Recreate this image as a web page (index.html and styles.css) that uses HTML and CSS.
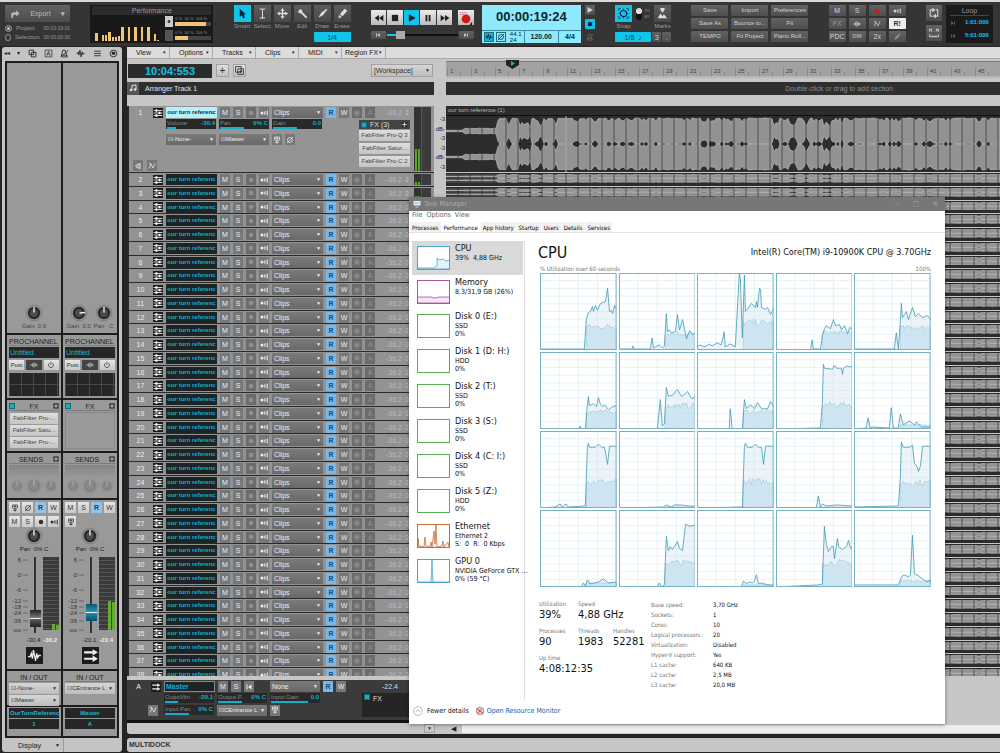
FILE: index.html
```html
<!DOCTYPE html>
<html lang="en">

<head>
  <meta charset="UTF-8">
  <meta name="viewport" content="width=device-width, initial-scale=1.0">
  <title>Studio Session</title>

  <link rel="stylesheet" href="styles.css">
</head>

<body>
  <svg class="sprite" aria-hidden="true">
    <symbol id="i-export" viewBox="0 0 16 16"><path d="M2 14V8q0-3 4-3h4V2l5 5-5 5V9H7q-2 0-2 2v3z" fill="currentColor"/></symbol>
    <symbol id="i-smart" viewBox="0 0 16 16"><path d="M4 1v12l3-2.500 2 4.500 2.500-1-2-4.500H13z" fill="currentColor"/></symbol>
    <symbol id="i-select" viewBox="0 0 16 16"><path d="M4 1.500h3l1 1 1-1h3M8 2.500v11M4 14.500h3l1-1 1 1h3" fill="none" stroke="currentColor" stroke-width="1.500"/></symbol>
    <symbol id="i-move" viewBox="0 0 16 16"><path d="M8 0l3 4H9v3h3V5l4 3-4 3V9H9v3h2l-3 4-3-4h2V9H4v2L0 8l4-3v2h3V4H5z" fill="currentColor"/></symbol>
    <symbol id="i-wrench" viewBox="0 0 16 16"><path d="M2 4l2-2h3l1 4 7 7-2 2-7-7-4-1z" fill="currentColor"/></symbol>
    <symbol id="i-draw" viewBox="0 0 16 16"><path d="M14 1L6 7l-4 7 7-4 6-8z" fill="currentColor"/></symbol>
    <symbol id="i-erase" viewBox="0 0 16 16"><path d="M11 1l4 3-7 8-4-3zM3 10l4 3-5 2z" fill="currentColor"/></symbol>
    <symbol id="i-rew" viewBox="0 0 16 16"><path d="M8 3v10L1 8zM15 3v10L8 8z" fill="currentColor"/></symbol>
    <symbol id="i-fwd" viewBox="0 0 16 16"><path d="M1 3v10l7-5zM8 3v10l7-5z" fill="currentColor"/></symbol>
    <symbol id="i-stop" viewBox="0 0 16 16"><path d="M3 3h10v10H3z" fill="currentColor"/></symbol>
    <symbol id="i-play" viewBox="0 0 16 16"><path d="M3 2v12l11-6z" fill="currentColor"/></symbol>
    <symbol id="i-pause" viewBox="0 0 16 16"><path d="M4 3h3v10H4zM9 3h3v10H9z" fill="currentColor"/></symbol>
    <symbol id="i-dot" viewBox="0 0 16 16"><circle cx="8" cy="8" r="4.500" fill="currentColor"/></symbol>
    <symbol id="i-rec" viewBox="0 0 16 16"><path d="M1 2h8M1 4h5" stroke="#d88" stroke-width="1"/><circle cx="8" cy="9" r="5" fill="currentColor"/><path d="M15 12v4h-3z" fill="#222"/></symbol>
    <symbol id="i-prev" viewBox="0 0 16 16"><path d="M3 3h2v10H3zM13 3v10L6 8z" fill="currentColor"/></symbol>
    <symbol id="i-next" viewBox="0 0 16 16"><path d="M11 3h2v10h-2zM3 3v10l7-5z" fill="currentColor"/></symbol>
    <symbol id="i-metro" viewBox="0 0 16 16"><path d="M5 2h4l4 12H2zM5 11L15 2M3 11h9" fill="none" stroke="currentColor" stroke-width="1.500"/></symbol>
    <symbol id="i-snap" viewBox="0 0 16 16"><circle cx="8" cy="8" r="4.500" fill="none" stroke="currentColor" stroke-width="1.500"/><path d="M1 4V1h3M12 1h3v3M15 12v3h-3M4 15H1v-3M8 1v3M8 12v3M1 8h3M12 8h3" fill="none" stroke="currentColor"/></symbol>
    <symbol id="i-marks" viewBox="0 0 16 16"><path d="M1 15l4-7 3 4 2-3 5 6zM5 0h6v3L8 7 5 3z" fill="currentColor"/></symbol>
    <symbol id="i-echo" viewBox="0 0 16 16"><circle cx="4" cy="8" r="3" fill="currentColor"/><path d="M9 5v6M12 4v8M15 3v10" stroke="currentColor" stroke-width="1.500"/></symbol>
    <symbol id="i-burst" viewBox="0 0 16 16"><path d="M8 1v14M1 8h14M3 3l10 10M13 3L3 13" stroke="currentColor" stroke-width="2"/></symbol>
    <symbol id="i-loop" viewBox="0 0 16 16"><path d="M6 3H2v10h3M10 13h4V3h-3M6 1v4l3-2zM10 11v4l-3-2z" fill="none" stroke="currentColor" stroke-width="1.800"/></symbol>
    <symbol id="i-range" viewBox="0 0 16 16"><path d="M1 6V2h4M11 2h4v4M2 2l3 4M14 2l-3 4M1 10v4h14v-4M5 12v2M8 12v2M11 12v2" fill="none" stroke="currentColor" stroke-width="1.500"/></symbol>
    <symbol id="i-windows" viewBox="0 0 16 16"><path d="M2 2h8v8H2zM6 6h8v8H6z" fill="none" stroke="currentColor" stroke-width="1.500"/></symbol>
    <symbol id="i-addwin" viewBox="0 0 16 16"><path d="M1 1h10v10H1zM5 5h10v10H5zM10 7v6M7 10h6" fill="none" stroke="currentColor" stroke-width="1.500"/></symbol>
    <symbol id="i-abox" viewBox="0 0 16 16"><path d="M2 2h12v12H2zM5 12l3-8 3 8M6 9h4" fill="none" stroke="currentColor" stroke-width="1.200"/></symbol>
    <symbol id="i-wave" viewBox="0 0 16 16"><path d="M1 8h2l1-3 1 6 2-9 2 12 2-9 1 5 1-2h2" fill="none" stroke="currentColor" stroke-width="1.500"/></symbol>
    <symbol id="i-list" viewBox="0 0 16 16"><path d="M2 4h12M2 8h12M2 12h12" stroke="currentColor" stroke-width="1.500"/></symbol>
    <symbol id="i-plug" viewBox="0 0 16 16"><circle cx="8" cy="8" r="6" fill="none" stroke="currentColor" stroke-width="1.500"/><path d="M5 5h6v5H5z" fill="currentColor"/></symbol>
    <symbol id="i-note" viewBox="0 0 16 16"><path d="M6 12V3l8-1v9" fill="none" stroke="currentColor" stroke-width="2"/><circle cx="4" cy="12" r="2.500" fill="currentColor"/><circle cx="12" cy="11" r="2.500" fill="currentColor"/></symbol>
    <symbol id="i-track" viewBox="0 0 16 16"><path d="M0 0h16v16H0z" fill="#1c1c1c"/><path d="M1 4h14M1 8h14M1 12h14" stroke="#ddd" stroke-width="1.500"/><path d="M4 2h3v4H4zM9 6h3v4H9zM4 10h3v4H4z" fill="#fff"/></symbol>
    <symbol id="i-bus" viewBox="0 0 16 16"><path d="M0 0h16v16H0z" fill="#1c1c1c"/><path d="M2 5h9M2 11h9" stroke="#eee" stroke-width="2"/><path d="M10 2l5 3-5 3zM10 8l5 3-5 3z" fill="#eee"/></symbol>
    <symbol id="i-audio" viewBox="0 0 16 16"><path d="M0 0h16v16H0z" fill="#1c1c1c"/><path d="M2 9h2l1-3 1 5 1-8 2 10 1-7 1 4 1-2h2" fill="none" stroke="#eee" stroke-width="1.200"/></symbol>
    <symbol id="i-mic" viewBox="0 0 16 16"><path d="M3 2h10v6l-3 2H6L3 8zM8 2v13M5 13h6M5 5h6" fill="none" stroke="currentColor" stroke-width="1.500"/></symbol>
    <symbol id="i-phase" viewBox="0 0 16 16"><circle cx="8" cy="8" r="5" fill="none" stroke="currentColor" stroke-width="1.500"/><path d="M2 14L14 2" stroke="currentColor" stroke-width="1.500"/></symbol>
    <symbol id="i-power" viewBox="0 0 16 16"><path d="M5 4a5 5 0 1 0 6 0M8 1v7" fill="none" stroke="currentColor" stroke-width="1.500"/></symbol>
    <symbol id="i-chain" viewBox="0 0 16 16"><circle cx="8" cy="8" r="4" fill="none" stroke="currentColor" stroke-width="1.500"/><path d="M0 8h16M6 6v4M10 6v4" stroke="currentColor" stroke-width="1.500"/></symbol>
    <symbol id="i-auto" viewBox="0 0 16 16"><path d="M2 13L6 4l4 8 4-9M2 3h4" fill="none" stroke="currentColor" stroke-width="1.500"/></symbol>
    <symbol id="i-lanes" viewBox="0 0 16 16"><path d="M14 4H8L3 8l5 4h6M7 8h7" fill="none" stroke="currentColor" stroke-width="2"/></symbol>
    <symbol id="i-plusbox" viewBox="0 0 16 16"><path d="M1 1h14v14H1z" fill="#333"/><path d="M8 3v10M3 8h10" stroke="#ddd" stroke-width="2"/></symbol>
    <symbol id="i-updown" viewBox="0 0 16 16"><path d="M8 0l4 4H4zM8 16l4-4H4zM3 6h10v1.500H3zM3 9h10v1.500H3z" fill="currentColor"/></symbol>
    <symbol id="i-knob" viewBox="0 0 32 32"><circle cx="16" cy="16" r="14" fill="none" stroke="#666"/><circle cx="16" cy="16" r="12" fill="#8c8c8c"/><circle cx="16" cy="16" r="11" fill="#292929"/><circle cx="16" cy="16" r="7" fill="#4b4b4b"/><path d="M16 5v10" stroke="#eee" stroke-width="2.500"/></symbol>
  </svg>

  <header class="topbar">
    <section class="export">
      <button class="btn export-btn"><svg><use href="#i-export"/></svg><span>Export</span><b>▾</b></button>
      <label><input type="radio" name="scope" checked><span>Project</span><span class="stamp">00:03:19:01</span></label>
      <label><input type="radio" name="scope"><span>Selection</span><span class="stamp">00:00:00:00</span></label>
    </section>

    <section class="perf">
      <h2>Performance</h2>
      <div class="perf-body">
        <div class="perf-bars" id="perf"></div>
        <div class="perf-side">
          <div class="perf-row"><i class="disk"></i><div><small>0 %&nbsp; 50 %&nbsp; 100 %</small><div class="gauge"><span class="gauge-hi"></span></div></div></div>
          <div class="perf-row"><i class="ram"></i><div><small>0 %&nbsp; 50 %&nbsp; 100 %</small><div class="gauge"><span class="gauge-lo"></span></div></div></div>
        </div>
      </div>
    </section>

    <section class="tools">
      <div class="tool-row" id="tools"></div>
      <button class="cyan-btn draw-res">1/4</button>
    </section>

    <section class="transport-group">
      <div class="transport">
        <div class="keys">
          <button class="key" aria-label="Rewind"><svg><use href="#i-rew"/></svg></button>
          <button class="key" aria-label="Stop"><svg><use href="#i-stop"/></svg></button>
          <button class="key on" aria-label="Play"><svg><use href="#i-play"/></svg></button>
          <button class="key" aria-label="Pause"><svg><use href="#i-pause"/></svg></button>
          <button class="key" aria-label="Fast forward"><svg><use href="#i-fwd"/></svg></button>
          <button class="key rec" aria-label="Record"><svg><use href="#i-rec"/></svg></button>
        </div>
        <div class="seek">
          <button class="btn" aria-label="Go to start"><svg><use href="#i-prev"/></svg></button>
          <input type="range" value="14" aria-label="Position">
          <button class="btn" aria-label="Go to end"><svg><use href="#i-next"/></svg></button>
        </div>
      </div>
      <div class="lcd">
        <output>00:00:19:24</output>
        <div class="lcd-row">
          <span class="lcd-icons"><svg class="sel"><use href="#i-wave"/></svg><svg><use href="#i-phase"/></svg></span>
          <span class="rate">44.1<br>24</span><b>120.00</b><b>4/4</b>
        </div>
      </div>
      <div class="mini">
        <button class="btn" aria-label="Preview"><svg><use href="#i-play"/></svg></button>
        <button class="btn cyan" aria-label="Arm"><svg><use href="#i-dot"/></svg></button>
        <button class="btn flat" aria-label="Metronome"><svg><use href="#i-metro"/></svg></button>
      </div>
    </section>

    <section class="snap">
      <div class="snap-row">
        <div class="tool active"><button aria-label="Snap"><svg><use href="#i-snap"/></svg></button><span>Snap</span></div>
        <div class="toggle"><i></i><small>TO<br>BY</small></div>
        <div class="tool"><button aria-label="Marks"><svg><use href="#i-marks"/></svg></button><span>Marks</span></div>
      </div>
      <div class="snap-res"><button class="cyan-btn">1/8 &nbsp;♪</button><button class="btn">3</button><button class="btn">.</button></div>
    </section>

    <section class="cmds">
      <button class="btn">Save</button><button class="btn">Import</button><button class="btn">Preferences</button>
      <button class="btn">Save As</button><button class="btn">Bounce to...</button><button class="btn">Fit</button>
      <button class="btn">TEMPO</button><button class="btn">Fit Project</button><button class="btn">Piano Roll...</button>
    </section>

    <section class="mix">
      <button class="btn">M</button><button class="btn">S</button><button class="btn red" aria-label="Record arm"><svg><use href="#i-dot"/></svg></button><button class="btn" aria-label="Input echo"><svg><use href="#i-echo"/></svg></button>
      <button class="btn dim">FX</button><button class="btn" aria-label="Chain"><svg><use href="#i-chain"/></svg></button><button class="btn" aria-label="Automation"><svg><use href="#i-auto"/></svg></button><button class="btn white">R!</button>
      <button class="btn">PDC</button><button class="btn tiny">DIM</button><button class="btn">2x</button><button class="btn dim" aria-label="Bypass"><svg><use href="#i-draw"/></svg></button>
    </section>

    <section class="loop">
      <div class="loop-keys">
        <button class="btn" aria-label="Loop"><svg><use href="#i-loop"/></svg></button>
        <button class="btn" aria-label="Set loop range"><svg><use href="#i-range"/></svg></button>
      </div>
      <div class="loop-box">
        <h2>Loop</h2>
        <p><svg><use href="#i-next"/></svg>1:01:000</p>
        <p><svg><use href="#i-prev"/></svg>5:01:000</p>
      </div>
    </section>
  </header>

  <div class="workspace">
    <aside class="inspector">
      <nav class="insp-bar">
        <span>◂◂</span><span>▾</span>
        <svg><use href="#i-windows"/></svg><svg><use href="#i-abox"/></svg><svg><use href="#i-metro"/></svg><svg><use href="#i-wave"/></svg><svg><use href="#i-list"/></svg><svg><use href="#i-plug"/></svg>
      </nav>
      <div class="strips" id="strips"></div>
      <button class="display">Display<span>▼</span></button>
    </aside>

    <main class="project">
      <section class="arrange">
        <nav class="menubar" id="menubar"></nav>
        <div class="panes">
          <div class="tracks">
            <div class="track-head">
              <output class="now">10:04:553</output>
              <button class="light-btn" aria-label="Add track">+</button>
              <button class="light-btn" aria-label="Duplicate"><svg><use href="#i-addwin"/></svg></button>
              <span class="drop light"><select aria-label="Workspace"><option>[Workspace]</option></select></span>
            </div>
            <div class="arranger"><i><svg><use href="#i-note"/></svg></i>Arranger Track 1</div>
            <div class="track-list">
              <div class="track first" id="track1"></div>
              <div class="clip-rows"><div class="rows" id="rows"></div></div>
            </div>
            <div class="master" id="master"></div>
          </div>

          <div class="timeline">
            <div class="ruler" id="ruler"></div>
            <div class="section-bar">Double-click or drag to add section</div>
            <div class="lanes">
              <div class="lane-big">
                <div class="db"><span>-3</span><span>dB-</span><span>-3</span><span>-3</span><span>dB-</span><span>-3</span></div>
                <div class="clip"><h3>our turn reference (1)</h3><svg id="wave" viewBox="0 0 554 56" preserveAspectRatio="none"></svg></div>
              </div>
              <div class="clip-rows"><div class="lane-rows" id="lanes"></div></div>
            </div>
          </div>
        </div>
        <div class="hscroll"><button class="light-btn">▼</button><span>◀</span><i></i></div>
      </section>
      <footer class="multidock">MULTIDOCK</footer>
    </main>
  </div>

  <section class="taskmgr">
    <header class="tm-title"><svg viewBox="0 0 16 16"><path d="M1 2h14v9H1z" fill="#dcebf5"/><path d="M3 8l2-3 2 3 3-4 3 3" fill="none" stroke="#5b99bd"/><path d="M5 13h6v2H5z" fill="#ccc"/></svg><span>Task Manager</span>
      <div class="tm-win"><button aria-label="Minimize">–</button><button aria-label="Maximize">□</button><button aria-label="Close">✕</button></div>
    </header>
    <nav class="tm-menu"><a href="#">File</a><a href="#">Options</a><a href="#">View</a></nav>
    <nav class="tm-tabs"><button>Processes</button><button class="current">Performance</button><button>App history</button><button>Startup</button><button>Users</button><button>Details</button><button>Services</button></nav>
    <div class="tm-body">
      <div class="tm-side" id="side"></div>
      <div class="tm-main">
        <div class="tm-head"><h1>CPU</h1><span>Intel(R) Core(TM) i9-10900K CPU @ 3.70GHz</span></div>
        <div class="tm-cap"><span>% Utilization over 60 seconds</span><span>100%</span></div>
        <div class="cores" id="cores"></div>
        <div class="stats">
          <div class="stats-big">
            <div><small>Utilization</small><b>39%</b></div>
            <div class="wide"><small>Speed</small><b>4,88 GHz</b></div>
            <div><small>Processes</small><b>90</b></div>
            <div><small>Threads</small><b>1983</b></div>
            <div><small>Handles</small><b>52281</b></div>
            <div class="full"><small>Up time</small><b>4:08:12:35</b></div>
          </div>
          <table>
            <tr><th scope="row">Base speed:</th><td>3,70 GHz</td></tr>
            <tr><th scope="row">Sockets:</th><td>1</td></tr>
            <tr><th scope="row">Cores:</th><td>10</td></tr>
            <tr><th scope="row">Logical processors:</th><td>20</td></tr>
            <tr><th scope="row">Virtualization:</th><td>Disabled</td></tr>
            <tr><th scope="row">Hyper-V support:</th><td>Yes</td></tr>
            <tr><th scope="row">L1 cache:</th><td>640 KB</td></tr>
            <tr><th scope="row">L2 cache:</th><td>2,5 MB</td></tr>
            <tr><th scope="row">L3 cache:</th><td>20,0 MB</td></tr>
          </table>
        </div>
      </div>
    </div>
    <footer class="tm-foot">
      <button><svg viewBox="0 0 16 16"><circle cx="8" cy="8" r="7" fill="none" stroke="#999"/><path d="M5 9l3-3 3 3" fill="none" stroke="#777"/></svg>Fewer details</button>
      <a href="#"><svg viewBox="0 0 16 16"><circle cx="8" cy="8" r="6" fill="#d9dde2" stroke="#b33"/><path d="M3 4l10 8M5 11l5-6" stroke="#b33" stroke-width="1.500"/></svg>Open Resource Monitor</a>
    </footer>
  </section>

  <script src="app.js"></script>
</body>

</html>
```
FILE: styles.css
```css
* {
  box-sizing: border-box;
}

body {
  margin: 0;
  height: 100vh;
  display: flex;
  flex-direction: column;
  overflow: hidden;
  position: relative;
  background: #242424;
  color: #222;
  font: 7px/9px "Liberation Sans", Arial, sans-serif;
}

h1, h2, h3, p {
  margin: 0;
  font-weight: normal;
  font-size: inherit;
}

button, select, input {
  font: inherit;
  color: inherit;
  margin: 0;
  padding: 0;
  border: none;
  background: none;
}

svg {
  display: block;
  width: 10px;
  height: 10px;
  flex: none;
}

.sprite {
  position: absolute;
  width: 0;
  height: 0;
}

/* top bar */
.topbar {
  display: flex;
  justify-content: space-between;
  height: 46px;
  padding: 3px 7px 3px 5px;
  border-top: 2px solid #d8d8d8;
  background: #353535;
  color: #999;
}

.btn {
  display: flex;
  align-items: center;
  justify-content: center;
  background: linear-gradient(#626262, #4e4e4e);
  color: #d2d2d2;
  border-radius: 1px;
  white-space: nowrap;
}

.btn.dim {
  color: #999;
}

.btn.tiny {
  font-size: 5px;
}

.btn.red {
  color: #d01818;
}

.btn.white {
  background: #eee;
  color: #333;
  font-weight: bold;
}

.btn.cyan {
  background: #14bfe4;
  color: #124;
}

.btn.flat {
  background: none;
  color: #666;
}

.cyan-btn {
  background: #12c3ea;
  color: #045;
  border-radius: 1px;
  height: 10px;
}

.export {
  width: 65px;
}

.export-btn {
  width: 100%;
  height: 17px;
  justify-content: space-around;
  margin-bottom: 2px;
  color: #bbb;
}

.export label {
  display: flex;
  align-items: center;
  gap: 4px;
  height: 9px;
  font-size: 6px;
}

.export input {
  appearance: none;
  width: 7px;
  height: 7px;
  border: 1px solid #888;
  border-radius: 50%;
}

.export input:checked {
  background: #ccc;
  box-shadow: inset 0 0 0 1px #333;
}

.stamp {
  margin-left: auto;
  font-size: 5px;
}

.perf {
  width: 123px;
  height: 38px;
  padding: 1px 2px;
  background: #191919;
}

.perf h2 {
  text-align: center;
  background: #2b2b2b;
}

.perf-body {
  display: flex;
  height: 27px;
  gap: 3px;
}

.perf-bars {
  flex: 1;
  display: flex;
  align-items: flex-end;
  gap: 1px;
  padding: 0 3px 1px;
}

.perf-bars span {
  flex: 1;
  background: #f2c478;
}

.perf-side {
  width: 46px;
  display: flex;
  flex-direction: column;
  justify-content: space-around;
}

.perf-row {
  display: flex;
  gap: 2px;
}

.perf-row div {
  flex: 1;
}

.perf-row i {
  width: 8px;
  height: 11px;
  background: #555;
}

.perf-row .disk {
  background: radial-gradient(circle, #444 20%, #ccc 25%);
}

.perf-row small {
  display: block;
  font-size: 4px;
  line-height: 6px;
  white-space: nowrap;
}

.gauge {
  background: #444;
  height: 4px;
}

.gauge span {
  display: block;
  height: 4px;
  background: #f2c478;
}

.gauge-hi {
  width: 86%;
}

.gauge-lo {
  width: 36%;
}

.tool-row {
  display: flex;
  gap: 3px;
}

.tool {
  width: 17px;
  display: flex;
  flex-direction: column;
  align-items: center;
  font-size: 6px;
}

.tool button {
  width: 17px;
  height: 17px;
  display: flex;
  align-items: center;
  justify-content: center;
  background: linear-gradient(#5c5c5c, #484848);
  color: #ddd;
}

.tool.active button {
  background: #12c3ea;
  color: #023;
}

.tool svg {
  width: 11px;
  height: 11px;
}

.draw-res {
  display: block;
  width: 37px;
  margin: 1px 0 0 auto;
}

.transport-group {
  display: flex;
  gap: 8px;
}

.transport {
  width: 103px;
  padding-top: 5px;
}

.keys {
  display: flex;
  gap: 1px;
}

.key {
  flex: 1;
  height: 15px;
  display: flex;
  align-items: center;
  justify-content: center;
  background: linear-gradient(#ececec, #bbb);
  color: #222;
}

.key.on {
  background: #12c3ea;
}

.key.rec {
  margin-left: 5px;
  color: #d01818;
}

.key.rec svg {
  width: 14px;
  height: 14px;
}

.seek {
  display: flex;
  align-items: center;
  gap: 1px;
  margin-top: 5px;
}

.seek .btn {
  width: 15px;
  height: 8px;
}

.seek svg {
  width: 6px;
  height: 6px;
}

.seek input {
  appearance: none;
  flex: 1;
  min-width: 0;
  height: 9px;
  background: linear-gradient(90deg, #12c3ea 10px, #111 10px) center / 100% 2px no-repeat;
}

.seek input::-webkit-slider-thumb {
  appearance: none;
  width: 9px;
  height: 8px;
  background: #aaa;
}

.lcd {
  width: 99px;
  height: 38px;
  display: flex;
  flex-direction: column;
  background: #8fe9fc;
  color: #0b2530;
}

.lcd output {
  flex: 1;
  text-align: center;
  font-size: 13px;
  line-height: 24px;
  font-weight: bold;
}

.lcd-row {
  display: flex;
  height: 13px;
  border-top: 1px solid #3a8a9c;
  align-items: center;
}

.lcd-icons {
  display: flex;
  gap: 2px;
  padding: 0 2px;
}

.lcd-icons svg {
  border: 1px solid #266c80;
}

.lcd-icons .sel {
  background: #12b3dd;
}

.lcd-row .rate {
  font-size: 6px;
  line-height: 6px;
  padding: 0 2px;
}

.lcd-row b {
  flex: 1 1 auto;
  text-align: center;
  line-height: 12px;
  border-left: 1px solid #3a8a9c;
}

.mini {
  display: flex;
  flex-direction: column;
  justify-content: space-between;
  width: 10px;
  height: 37px;
  margin-left: -4px;
}

.mini .btn {
  height: 10px;
}

.mini svg {
  width: 8px;
  height: 8px;
}

.snap {
  width: 56px;
}

.snap-row, .snap-res {
  display: flex;
  justify-content: space-between;
}

.snap-res {
  gap: 1px;
  margin-top: 1px;
}

.snap-res .cyan-btn {
  flex: 1;
}

.snap-res .btn {
  width: 9px;
}

.toggle {
  display: flex;
  gap: 2px;
  padding-top: 3px;
}

.toggle i {
  width: 6px;
  height: 12px;
  border-radius: 3px;
  background: radial-gradient(circle at 3px 3px, #ddd 3px, #111 3px);
}

.toggle small {
  font-size: 4px;
  line-height: 6px;
}

.cmds, .mix {
  display: grid;
  grid-template-rows: repeat(3, 11px);
  gap: 2px 3px;
}

.cmds {
  grid-template-columns: repeat(3, 37px);
  font-size: 6px;
}

.mix {
  grid-template-columns: repeat(4, 17px);
}

.mix svg {
  width: 8px;
  height: 8px;
}

.loop {
  display: flex;
  gap: 4px;
}

.loop-keys {
  display: flex;
  flex-direction: column;
  gap: 4px;
}

.loop-keys .btn {
  width: 16px;
  height: 16px;
}

.loop-box {
  width: 47px;
  height: 38px;
  padding: 1px 4px;
  background: #1a1a1a;
}

.loop-box h2 {
  text-align: center;
  border-bottom: 1px solid #444;
}

.loop-box p {
  display: flex;
  justify-content: space-between;
  align-items: center;
  height: 13px;
  color: #18c4e8;
  font-weight: bold;
  font-size: 6px;
}

.loop-box svg {
  width: 6px;
  height: 6px;
  color: #666;
}

/* inspector */
.workspace {
  flex: 1;
  min-height: 0;
  display: flex;
  gap: 5px;
  padding: 1px 0 1px 2px;
}

.inspector {
  width: 120px;
  display: flex;
  flex-direction: column;
  background: #c4c4c4;
  border-radius: 3px;
}

.insp-bar {
  display: flex;
  align-items: center;
  justify-content: space-between;
  height: 12px;
  margin: 0 4px 2px 2px;
  font-size: 6px;
}

.insp-bar svg {
  width: 9px;
  height: 9px;
}

.strips {
  flex: 1;
  min-height: 0;
  display: flex;
  gap: 2px;
  margin: 0 3px;
  padding: 2px;
  background: #1d1d1d;
}

.strip {
  flex: 1;
  min-width: 0;
  display: flex;
  flex-direction: column;
  gap: 2px;
}

.strip > section {
  background: #999;
  padding: 2px;
}

.strip .gain {
  flex: 1;
  display: flex;
  align-items: flex-end;
  justify-content: space-around;
  color: #444;
}

.strip .gain div {
  display: flex;
  flex-direction: column;
  align-items: center;
  font-size: 6px;
  white-space: nowrap;
}

.knob {
  width: 18px;
  height: 18px;
}

.knob.right {
  transform: rotate(85deg);
}

.strip h3 {
  display: flex;
  align-items: center;
  justify-content: space-between;
  height: 9px;
  margin-bottom: 1px;
  border-bottom: 1px solid #7c7c7c;
}

.strip h3 svg {
  width: 6px;
  height: 6px;
}

.strip h3.center {
  justify-content: center;
}

.preset, .name {
  background: #262626;
  color: #1fb6c9;
  height: 11px;
  line-height: 11px;
  padding: 0 1px;
  white-space: nowrap;
  overflow: hidden;
}

.pc-keys {
  display: flex;
  gap: 2px;
  padding: 2px 0 3px;
}

.strip-btn {
  display: flex;
  align-items: center;
  justify-content: center;
  height: 10px;
  flex: 1;
  background: linear-gradient(#e6e6e6, #c8c8c8);
  color: #333;
}

.pc-keys .strip-btn {
  font-size: 6px;
}

.strip-btn svg {
  width: 8px;
  height: 8px;
}

.strip-btn.dark {
  background: #444;
  color: #bbb;
}

.strip-btn.read {
  background: #8ec4ee;
  color: #146;
  font-weight: bold;
}

.eq {
  height: 23px;
  background: repeating-linear-gradient(90deg, #484848 0 1px, transparent 1px 12px), linear-gradient(#262626 11px, #484848 11px, #484848 12px, #262626 12px);
}

.fx-slots {
  height: 37px;
  display: flex;
  flex-direction: column;
  gap: 1px;
  border: 1px solid #8a8a8a;
}

.fx-slots.filled {
  border-color: transparent;
}

.plugin {
  height: 11px;
  line-height: 11px;
  text-align: center;
  background: linear-gradient(#dedede, #c4c4c4);
  color: #444;
  font-size: 6px;
  white-space: nowrap;
}

.led {
  width: 6px;
  height: 6px;
  border: 1px solid #136d7a;
  background: #26a6b6;
}

.send-slot {
  height: 11px;
  background: linear-gradient(#858585, #959595);
}

.send-knobs {
  display: flex;
  justify-content: space-around;
  align-items: center;
  height: 20px;
  opacity: .2;
}

.send-knobs svg {
  width: 14px;
  height: 14px;
}

.send-knobs svg:nth-child(2) {
  width: 18px;
  height: 18px;
}

.ch-keys {
  display: grid;
  grid-template-columns: repeat(4, 11px);
  gap: 3px 2px;
  height: 25px;
}

.ch-keys .strip-btn {
  height: 11px;
}

.strip .fader-area {
  display: flex;
  flex-direction: column;
  align-items: center;
  font-size: 6px;
  padding-bottom: 3px;
}

.fader-row {
  display: flex;
  height: 76px;
  gap: 1px;
  margin-top: 3px;
  width: 100%;
}

.scale {
  width: 19px;
  height: 76px;
  font-size: 6px;
}

.fader {
  appearance: none;
  writing-mode: vertical-lr;
  direction: rtl;
  width: 12px;
  height: 76px;
  background: linear-gradient(#333, #333) center / 2px 100% no-repeat;
}

.fader::-webkit-slider-thumb {
  appearance: none;
  width: 11px;
  height: 17px;
  background: linear-gradient(#222, #777 45%, #eee 48%, #eee 54%, #555 56%, #222);
}

.fader.blue::-webkit-slider-thumb {
  background: linear-gradient(#0b5670, #2294bb 45%, #eee 48%, #eee 54%, #1c86ab 56%, #0b4c64);
}

.level {
  margin-left: auto;
  width: 16px;
  height: 73px;
  display: flex;
  align-items: flex-end;
  justify-content: flex-end;
  gap: 1px;
  background: repeating-linear-gradient(#3a3a3a 0 3px, #555 3px 4px);
}

.level span {
  width: 3px;
  background: #62ac2e;
}

.readout {
  display: flex;
  justify-content: flex-end;
  gap: 3px;
  width: 100%;
  padding: 3px 2px 2px;
}

.readout b {
  color: #eee;
}

.type-icon {
  width: 17px;
  height: 17px;
}

.io {
  height: 34px;
}

.strip .ident {
  padding: 1px 2px 6px;
  text-align: center;
}

.ident .name {
  height: 10px;
  margin-bottom: 1px;
  line-height: 10px;
  font-size: 6px;
  font-weight: bold;
}

.drop {
  display: flex;
  align-items: center;
  height: 11px;
  background: linear-gradient(#7a7a7a, #696969);
  color: #eee;
  overflow: hidden;
}

.drop select {
  appearance: none;
  flex: 1;
  min-width: 0;
  height: 11px;
  padding-left: 2px;
}

.drop::after {
  content: "▼";
  width: 9px;
  font-size: 5px;
  text-align: center;
}

.drop.light {
  background: linear-gradient(#d6d6d6, #bdbdbd);
  color: #333;
}

.io .drop {
  margin-bottom: 1px;
  font-size: 6px;
}

.display {
  display: flex;
  justify-content: space-between;
  align-items: center;
  height: 14px;
  width: 62px;
  padding: 0 3px 0 16px;
  border-right: 1px solid #999;
}

.display span {
  font-size: 5px;
}

/* project pane */
.project {
  flex: 1;
  min-width: 0;
  display: flex;
  flex-direction: column;
  gap: 4px;
}

.arrange {
  flex: 1;
  min-height: 0;
  display: flex;
  flex-direction: column;
  background: #c6c6c6;
  border-radius: 3px 0 0 3px;
}

.multidock {
  height: 14px;
  padding-left: 2px;
  line-height: 14px;
  background: #c6c6c6;
  border-radius: 3px 0 0 3px;
  font-weight: bold;
  color: #333;
}

.menubar {
  display: flex;
  height: 12px;
  background: #dcdcdc;
  border-bottom: 1px solid #aaa;
}

.menubar button {
  width: 43px;
  border-right: 1px solid #aaa;
  display: flex;
  align-items: center;
  justify-content: space-between;
  padding: 0 3px 0 9px;
  white-space: nowrap;
}

.menubar button:last-child {
  width: 44px;
  padding-left: 3px;
}

.menubar span {
  font-size: 5px;
}

.panes {
  flex: 1;
  min-height: 0;
  display: flex;
}

.tracks {
  width: 307px;
  display: flex;
  flex-direction: column;
}

.track-head {
  display: flex;
  align-items: center;
  gap: 4px;
  height: 23px;
  padding: 0 1px;
}

.now {
  width: 84px;
  height: 14px;
  line-height: 14px;
  text-align: center;
  font-size: 11px;
  font-weight: bold;
  background: #2b2b2b;
  color: #14c0e2;
}

.light-btn {
  display: flex;
  align-items: center;
  justify-content: center;
  width: 13px;
  height: 13px;
  background: linear-gradient(#dedede, #c2c2c2);
  border: 1px solid #a2a2a2;
  font-size: 10px;
  color: #333;
}

.light-btn svg {
  width: 9px;
  height: 9px;
}

.track-head .drop {
  margin-left: auto;
  width: 62px;
  height: 13px;
  border: 1px solid #a2a2a2;
}

.arranger {
  display: flex;
  align-items: center;
  gap: 6px;
  height: 13px;
  background: #2e2e2e;
  color: #e4e4e4;
}

.arranger i {
  width: 12px;
  height: 13px;
  padding: 2px;
  background: #555;
}

.arranger svg {
  width: 8px;
  height: 8px;
}

.track-list {
  flex: 1;
  min-height: 0;
  display: flex;
  flex-direction: column;
  margin-top: 11px;
  background: #2a2a2a;
  overflow: hidden;
}

.track.first {
  display: flex;
  height: 66px;
  margin: 0 0 1px 2px;
  background: #949494;
}

.track-main {
  flex: 1;
  min-width: 0;
}

.line {
  display: flex;
  align-items: center;
  gap: 3px;
  height: 13px;
  color: #eee;
}

.line .num {
  width: 21px;
  padding-left: 2px;
  text-align: center;
}

.line .tname {
  width: 51px;
  height: 11px;
  line-height: 11px;
  background: #1c2426;
  color: #12aecd;
  font-size: 6px;
  font-weight: bold;
  text-align: center;
  white-space: nowrap;
  overflow: hidden;
}

.first .line .tname {
  background: #b5f1fb;
  color: #134;
}

.tbtn {
  display: flex;
  align-items: center;
  justify-content: center;
  width: 10px;
  height: 11px;
  background: #777;
  color: #eee;
}

.tbtn svg {
  width: 8px;
  height: 8px;
}

.tbtn.off {
  background: #6c6c6c;
  color: #909090;
}

.tbtn.read {
  background: #7ab7e6;
  color: #14507e;
  font-weight: bold;
}

.line .drop {
  width: 51px;
}

.line .vol {
  display: flex;
  align-items: center;
  gap: 2px;
  margin-left: auto;
  padding-right: 2px;
  color: #bbb;
}

.vol svg {
  width: 6px;
  height: 7px;
}

.vmeter {
  width: 17px;
  margin: 1px 3px 1px 2px;
  display: flex;
  align-items: flex-end;
  background: linear-gradient(90deg, #333 0 7px, #555 7px 8px, #3c3c3c 8px);
}

.vmeter span {
  width: 2px;
  height: 22px;
  margin-left: 1px;
  background: #5da12d;
}

.track-body {
  display: flex;
  height: 53px;
  justify-content: space-between;
}

.track-left {
  display: flex;
  flex-direction: column;
}

.params, .routes {
  display: flex;
  gap: 3px;
  padding-left: 37px;
}

.param {
  width: 50px;
  height: 10px;
  padding: 0 1px;
  display: flex;
  flex-wrap: wrap;
  justify-content: space-between;
  line-height: 8px;
  font-size: 6px;
  background: #282828;
  color: #888;
  white-space: nowrap;
}

.param b {
  color: #12aecd;
}

.param-bar {
  width: 100%;
}

.param i {
  display: block;
  height: 2px;
  background: #12aecd;
}

.routes {
  margin-top: 5px;
}

.routes .drop, .master-row .drop {
  width: 50px;
  font-size: 6px;
}

.foot-keys {
  display: flex;
  gap: 4px;
  margin: auto 0 1px 4px;
}

.fx-panel {
  width: 51px;
  margin: 1px 2px 0 0;
}

.fx-panel h4, .master-fx {
  display: flex;
  align-items: center;
  gap: 3px;
  margin: 0;
  height: 9px;
  padding: 0 2px;
  background: #444;
  color: #ddd;
  font-weight: normal;
}

.fx-panel h4 svg {
  width: 7px;
  height: 7px;
  margin-left: auto;
}

.fx-panel .plugin {
  margin: 1px 0 2px;
}

.clip-rows {
  flex: 1;
  min-height: 0;
  overflow: hidden;
}

/* runs past the bottom so the last row is cut off */
.rows, .lane-rows {
  height: calc(100% + 5px);
  display: grid;
  grid-auto-rows: 1fr;
  gap: 1px;
}

.rows .track {
  display: flex;
  min-height: 0;
  margin-left: 2px;
  background: #929292;
  overflow: hidden;
}

.rows .line {
  flex: 1;
}

.rows .vmeter span {
  height: 3px;
  box-shadow: 3px 0 #5da12d;
}

.master {
  height: 43px;
  margin-top: 4px;
  background: #3b3b3b;
  border-bottom: 3px solid #111;
  display: flex;
  color: #ddd;
}

.master .tname {
  border: 1px solid #888;
  line-height: 9px;
  padding-left: 1px;
  font-size: 7px;
  text-align: left;
}

.master .line .drop {
  width: 50px;
}

.tbtn-gap {
  width: 10px;
}

.master-left {
  width: 235px;
}

.master-row {
  display: flex;
  align-items: center;
  gap: 3px;
  padding-left: 21px;
  height: 14px;
}

.master-row .param {
  margin-left: 3px;
}

.master-right {
  flex: 1;
  padding-top: 2px;
}

.master-right span {
  display: block;
  width: 36px;
  text-align: right;
  margin-bottom: 2px;
}

.master-fx {
  height: 24px;
  align-items: flex-start;
  padding-top: 1px;
  background: #252525;
}

/* timeline */
.timeline {
  flex: 1;
  min-width: 0;
  display: flex;
  flex-direction: column;
  overflow: hidden;
}

.ruler {
  display: flex;
  margin: 2px 0 4px 12px;
  height: 17px;
  padding: 6px 0 0 1px;
  background: #a2a2a2;
  border-top: 1px solid #777;
  border-bottom: 2px solid #b8b8b8;
  font-size: 6px;
  color: #444;
  position: relative;
}

.ruler span {
  flex: 0 0 24px;
  padding-left: 2px;
  border-left: 1px solid #888;
  line-height: 7px;
  height: 8px;
  background: linear-gradient(#888, #888) 12px 100% / 1px 4px no-repeat;
}

.playhead {
  position: absolute;
  left: 60px;
  top: -2px;
  width: 13px;
  height: 9px;
}

.section-bar {
  margin-left: 12px;
  height: 13px;
  line-height: 13px;
  padding-right: 107px;
  text-align: right;
  background: #2e2e2e;
  color: #8c8c8c;
}

.lanes {
  flex: 1;
  min-height: 0;
  margin: 11px 0 47px;
  display: flex;
  flex-direction: column;
  overflow: hidden;
}

.lane-big {
  display: flex;
  height: 66px;
  margin-bottom: 1px;
}

.db {
  width: 12px;
  padding: 9px 1px 0 0;
  text-align: right;
  font-size: 6px;
  display: flex;
  flex-direction: column;
  justify-content: space-around;
}

.clip {
  flex: 1;
  min-width: 0;
  background: #2c2c2c;
}

.clip h3 {
  height: 10px;
  padding-left: 2px;
  font-size: 6px;
  color: #b8b8b8;
  border-bottom: 1px solid #111;
}

.clip svg {
  width: 100%;
  height: 56px;
}

.lane-rows {
  margin-left: 12px;
}

.lane {
  display: flex;
  min-height: 0;
  padding: 1px 0 3px;
  background: #2c2c2c;
  overflow: hidden;
}

.lane svg {
  flex: 1;
  height: 100%;
  background: #414141;
}

.hscroll {
  display: flex;
  align-items: center;
  gap: 16px;
  height: 11px;
  padding-left: 297px;
}

.hscroll .light-btn {
  height: 9px;
  width: 11px;
  font-size: 5px;
}

.hscroll i {
  flex: 1;
  height: 8px;
  margin-left: -10px;
  background: #eee;
}

/* task manager window, floats over the project */
.taskmgr {
  position: absolute;
  left: 409px;
  top: 197px;
  width: 536px;
  background: #fff;
  color: #111;
  font: 7px/9px "DejaVu Sans Condensed", "DejaVu Sans", sans-serif;
  box-shadow: 0 1px 4px rgba(0, 0, 0, 0.4);
}

.tm-title {
  display: flex;
  align-items: center;
  gap: 3px;
  height: 14px;
  padding-left: 4px;
  background: #777;
  color: #aaa;
}

.tm-title svg {
  width: 8px;
  height: 8px;
}

.tm-win {
  display: flex;
  gap: 14px;
  margin-left: auto;
  padding-right: 7px;
}

.tm-menu {
  display: flex;
  gap: 4px;
  padding-left: 3px;
  height: 11px;
}

.tm-menu a {
  color: #666;
  text-decoration: none;
}

.tm-tabs {
  display: flex;
  gap: 1px;
  height: 11px;
  padding-left: 1px;
  font-size: 6px;
  border-bottom: 1px solid #e2e2e2;
}

.tm-tabs button {
  padding: 0 2px;
  background: #f1f1f1;
  color: #000;
}

.tm-tabs .current {
  background: #fff;
}

.tm-body {
  display: flex;
  padding-top: 8px;
}

.tm-side {
  width: 116px;
  padding-left: 3px;
  border-right: 1px solid #ddd;
  height: 459px;
}

.side-item {
  display: flex;
  gap: 5px;
  width: 111px;
  height: 35px;
  padding: 2px 0 0 5px;
  white-space: nowrap;
  text-align: left;
  line-height: 8px;
}

.side-item.two {
  height: 34px;
}

.side-item.current {
  background: #d9d9d9;
}

.side-item svg {
  width: 33px;
  height: 24px;
  margin-top: 3px;
}

.side-item strong {
  display: block;
  font-size: 9px;
  line-height: 11px;
  font-weight: normal;
}

.tm-main {
  flex: 1;
  padding: 0 14px 0 13px;
}

.tm-head {
  display: flex;
  justify-content: space-between;
  align-items: center;
  height: 23px;
  font-size: 9px;
}

.tm-head h1 {
  font-size: 16px;
}

.tm-cap {
  display: flex;
  justify-content: space-between;
  height: 9px;
  padding-left: 2px;
  color: #777;
  font-size: 6px;
}

.cores {
  display: grid;
  grid-template-columns: repeat(5, 1fr);
  gap: 2px;
  padding-left: 2px;
}

.cores svg {
  width: 100%;
  height: 77px;
}

.stats {
  display: flex;
  padding: 12px 0 0 1px;
  color: #777;
}

.stats-big {
  display: grid;
  grid-template-columns: 39px 35px 38px;
  align-content: start;
  row-gap: 4px;
}

.stats-big div {
  white-space: nowrap;
}

.stats-big .wide {
  grid-column: span 2;
}

.stats-big .full {
  grid-column: span 3;
}

.stats-big small {
  display: block;
  font-size: 6px;
  line-height: 9px;
}

.stats-big b {
  display: block;
  font-size: 11px;
  line-height: 14px;
  font-weight: normal;
  color: #111;
}

.stats table {
  border-collapse: collapse;
  height: 90px;
  font-size: 6px;
}

.stats th, .stats td {
  padding: 0;
  height: 10px;
  font-weight: normal;
  text-align: left;
  white-space: nowrap;
}

.stats th {
  width: 62px;
}

.stats td {
  color: #111;
}

.tm-foot {
  display: flex;
  align-items: center;
  gap: 6px;
  height: 22px;
  margin-bottom: 2px;
  padding-left: 4px;
}

.tm-foot button, .tm-foot a {
  display: flex;
  align-items: center;
  gap: 4px;
}

.tm-foot a {
  gap: 2px;
  color: #0066b4;
  text-decoration: none;
}
```
FILE: app.js
```js
// small repeatable random so the wave looks the same on every load
let seed = 7;
function rnd() {
  seed = (seed * 16807) % 2147483647;
  return seed / 2147483647;
}

const icon = name => `<svg><use href="#i-${name}"/></svg>`;
const byId = id => document.getElementById(id);
const drop = (text, cls = '') => `<span class="drop ${cls}"><select aria-label="${text}"><option>${text}</option></select></span>`;

// performance meter
byId('perf').innerHTML = [8, 0, 6, 6, 9, 4, 4, 5, 13, 0, 13, 0, 13, 0, 13, 0, 13, 0, 7, 1]
  .map(h => `<span style="height:${h * 4}%"></span>`).join('');

byId('tools').innerHTML = [['Smart', 'smart'], ['Select', 'select'], ['Move', 'move'], ['Edit', 'wrench'], ['Draw', 'draw'], ['Erase', 'erase']]
  .map(([t, i], n) => `<div class="tool ${n === 0 ? 'active' : ''}"><button aria-label="${t}">${icon(i)}</button><span>${t}</span></div>`).join('');

byId('menubar').innerHTML = ['View', 'Options', 'Tracks', 'Clips', 'MIDI', 'Region FX']
  .map(t => `<button>${t}<span>▾</span></button>`).join('');

// channel strips
const marks = [['6', 4], ['0', 19], ['-6', 34], ['-12', 45], ['-18', 51], ['-24', 57], ['-36', 65], ['-oo', 74]];

function strip(s) {
  return `<div class="strip">
    <section class="gain">${s.gain}</section>
    <section><h3>PROCHANNEL</h3><div class="preset">Untitled</div>
      <div class="pc-keys"><button class="strip-btn">Post</button><button class="strip-btn dark" aria-label="Routing">${icon('chain')}</button><button class="strip-btn" aria-label="Power">${icon('power')}</button></div>
      <div class="eq"></div></section>
    <section><h3><i class="led"></i>FX${icon('plusbox')}</h3>
      <div class="fx-slots ${s.fx.length ? 'filled' : ''}">${s.fx.map(f => `<div class="plugin">${f}</div>`).join('')}</div></section>
    <section><h3><i></i>SENDS${icon('plusbox')}</h3><div class="send-slot"></div>
      <div class="send-knobs">${icon('knob')}${icon('knob')}${icon('knob')}</div></section>
    <section><div class="ch-keys">${s.keys.map(k => `<button class="strip-btn ${k === 'R' ? 'read' : ''}" aria-label="${k}">${k.length > 1 ? icon(k) : k}</button>`).join('')}</div>
      <div class="fader-area"><svg class="knob"><use href="#i-knob"/></svg>Pan &nbsp;0% C
      <div class="fader-row">
        <svg class="scale" viewBox="0 0 19 76">${marks.map(([t, y]) => `<text x="12" y="${y + 1}" text-anchor="end" fill="#333">${t}</text><path d="M14 ${y - 1}h5" stroke="#666"/>`).join('')}</svg>
        <input class="fader ${s.cls}" type="range" value="${s.value}" aria-label="${s.name} volume">
        <div class="level"><span style="height:${s.level}%"></span><span style="height:${s.level - 1}%"></span></div>
      </div>
      <div class="readout"><span>${s.vol}</span><b>${s.peak}</b></div>
      <svg class="type-icon"><use href="#i-${s.type}"/></svg></div></section>
    <section class="io"><h3 class="center">IN / OUT</h3>${s.io.map(t => drop(t, 'light')).join('')}</section>
    <section class="ident"><div class="name">${s.name}</div><div class="name">${s.id}</div></section>
  </div>`;
}

const knob = (label, cls = '') => `<div><svg class="knob ${cls}"><use href="#i-knob"/></svg>${label}</div>`;

byId('strips').innerHTML = strip({
  gain: knob('Gain &nbsp;0.0'), fx: ['FabFilter Pro-...', 'FabFilter Satu...', 'FabFilter Pro-...'],
  keys: ['mic', 'phase', 'R', 'W', 'M', 'S', 'dot', 'echo'], cls: '', value: 10, level: 8,
  vol: '-30.4', peak: '-36.2', type: 'audio', io: ['⊡-None-', '⊡Master'], name: 'OurTurnReferenc', id: '1'
}) + strip({
  gain: knob('Gain &nbsp;0.0', 'right') + knob('Pan &nbsp; C'), fx: [],
  keys: ['M', 'S', 'R', 'W', 'mic'], cls: 'blue', value: 20, level: 40,
  vol: '-20.1', peak: '-22.4', type: 'bus', io: ['⊡CEntrance L'], name: 'Master', id: 'A'
});

// track rows
function line(n) {
  return `<div class="line"><span class="num">${n}</span>${icon('track')}
    <span class="tname">our turn referenc</span>
    <button class="tbtn">M</button><button class="tbtn">S</button><button class="tbtn off" aria-label="Arm">${icon('dot')}</button><button class="tbtn" aria-label="Echo">${icon('echo')}</button>
    ${drop('Clips')}
    <button class="tbtn read">R</button><button class="tbtn">W</button><button class="tbtn off" aria-label="Freeze">${icon('burst')}</button><button class="tbtn off">A</button>
    <span class="vol">-36.2${icon('updown')}</span></div>`;
}

const param = (label, value, w) => `<div class="param"><span>${label}</span><b>${value}</b><div class="param-bar"><i style="width:${w}%"></i></div></div>`;

byId('track1').innerHTML = `<div class="track-main">${line(1)}
  <div class="track-body">
    <div class="track-left">
      <div class="params">${param('Volume', '-30.4', 18)}${param('Pan', '0% C', 50)}${param('Gain', '0.0', 50)}</div>
      <div class="routes">${drop('⊡-None-')}${drop('⊡Master')}<button class="tbtn" aria-label="Input">${icon('mic')}</button><button class="tbtn" aria-label="Phase">${icon('phase')}</button></div>
      <div class="foot-keys"><button class="tbtn" aria-label="Lanes">${icon('lanes')}</button><button class="tbtn" aria-label="Automation">${icon('auto')}</button></div>
    </div>
    <div class="fx-panel"><h4><i class="led"></i>FX (3)${icon('plusbox')}</h4><div class="plugin">FabFilter Pro-Q 3</div><div class="plugin">FabFilter Satur...</div><div class="plugin">FabFilter Pro-C 2</div></div>
  </div></div><div class="vmeter"><span></span><span></span></div>`;

let rows = '';
for (let i = 2; i <= 38; i++) {
  rows += `<div class="track">${line(i)}<div class="vmeter"><span></span></div></div>`;
}
byId('rows').innerHTML = rows;

byId('master').innerHTML = `<div class="master-left">
  <div class="line"><span class="num">A</span>${icon('bus')}<span class="tname">Master</span>
    <button class="tbtn">M</button><button class="tbtn">S</button><button class="tbtn" aria-label="Mono">${icon('prev')}</button><span class="tbtn-gap"></span>
    ${drop('None')}<button class="tbtn read">R</button><button class="tbtn">W</button></div>
  <div class="params">${param('OutptVlm', '-20.1', 28)}${param('Output P.', '0% C', 50)}${param('Input Gain', '0.0', 78)}</div>
  <div class="master-row"><button class="tbtn" aria-label="Automation">${icon('auto')}</button>${param('Input Pan', '0% C', 50)}${drop('⊡CEntrance L')}<button class="tbtn" aria-label="Input">${icon('mic')}</button></div>
  </div><div class="master-right"><span>-22.4</span><div class="master-fx"><i class="led"></i>FX</div></div>`;

// ruler
let ticks = '';
for (let i = 1; i <= 45; i += 2) {
  ticks += `<span>${i}</span>`;
}
byId('ruler').innerHTML = ticks + '<svg class="playhead" viewBox="0 0 13 9"><path d="M0 0h13v5L6.500 9 0 5z" fill="#222"/><path d="M5 1v5l4-2.500z" fill="#2eb558"/></svg>';

// loudness of the clip at pixel x
function loud(x) {
  if (x < 18) return 0.7;
  if (x < 52) return 2 + rnd();
  const gaps = [[60, 66], [73, 85], [93, 98], [108, 112], [116, 118], [327, 333], [343, 352], [358, 364], [376, 386], [394, 398]];
  if (gaps.some(([a, b]) => x > a && x < b)) return 3 + rnd() * 6;
  return rnd() < 0.25 ? 9 + rnd() * 2 : 12 + rnd();
}

const amps = [];
for (let x = 0; x <= 554; x += 2) {
  amps.push(loud(x));
}

function channel(mid, scale) {
  const top = amps.map((a, i) => `${i * 2},${(mid - a * scale).toFixed(1)}`);
  const bottom = amps.map((a, i) => `${i * 2},${(mid + a * scale).toFixed(1)}`).reverse();
  return `<polygon points="${top.concat(bottom).join(' ')}" fill="#929292" stroke="#bdbdbd" stroke-width=".7"/>`;
}

let beats = '';
for (let x = 12; x < 554; x += 12) {
  beats += `M${x} 0V56`;
}
byId('wave').innerHTML = channel(15, 1) + channel(41, 1) +
  `<path d="${beats}" stroke="#333" stroke-opacity=".7"/><path d="M120 0V56" stroke="#ccc"/>`;

let lanes = '';
for (let i = 2; i <= 38; i++) {
  lanes += `<div class="lane"><svg viewBox="0 0 554 9" preserveAspectRatio="none">${channel(2.5, 0.15)}${channel(6.5, 0.15)}<path d="${beats}" stroke="#333" stroke-opacity=".7"/></svg></div>`;
}
byId('lanes').innerHTML = lanes;

// task manager, one entry per logical processor: line points and kernel level
const cores = [
  ['0,1 44,1 46,31 48,37 50,38 52,43 53,38 55,44 57,39 60,46 65,48 67,61 69,38 71,39 72,36 74,44 76,40', 23],
  ['0,1 13,1 14,4 15,1 31,1 33,12 34,2 40,5 43,2 45,4 47,36 48,18 50,20 52,17 56,18 58,35 60,20 63,30 66,16 67,11 70,19 73,15 76,17', 16],
  ['0,3 3,5 8,3 12,6 15,4 20,7 24,5 27,18 28,3 33,6 38,3 42,76 43,70 45,12 47,74 48,38 50,40 54,46 58,42 59,48 60,42 62,61 63,60 64,42 68,40 70,42 73,35 76,41', 27],
  ['0,0 34,0 36,10 37,1 44,1 46,14 48,21 50,24 54,21 57,30 59,24 63,25 65,20 68,24 71,16 73,22 76,21', 17],
  ['0,1 40,1 42,17 44,1 46,28 47,46 48,32 50,35 52,38 54,30 58,42 61,33 64,36 68,32 73,34 76,30', 22],
  ['0,0 38,0 40,3 41,0 45,0 47,24 48,32 49,23 53,25 56,22 58,31 60,24 62,22 64,24 68,19 72,22 76,23', 17],
  ['0,0 38,0 41,29 43,3 45,5 47,41 49,32 54,34 56,37 58,39 62,32 66,35 68,37 72,30 76,32', 23],
  ['0,0 32,0 33,20 35,0 45,0 47,29 49,20 53,24 57,20 60,26 64,20 70,20 73,27 76,22', 17],
  ['0,0 44,1 46,25 47,64 48,60 56,59 58,63 60,60 65,60 66,54 67,60 70,62 76,61', 24],
  ['0,0 12,1 14,11 16,1 18,2 35,1 37,21 39,1 44,1 46,15 49,4 55,8 60,4 62,7 67,2 76,2', 4],
  ['0,0 15,1 20,4 22,1 26,4 28,1 45,2 47,60 48,64 49,60 55,60 58,63 61,60 64,60 67,43 69,61 76,61', 26],
  ['0,0 44,1 47,3 52,1 55,3 62,3 68,2 76,2', 1],
  ['0,0 45,1 47,60 48,64 50,60 55,60 58,63 61,60 64,60 66,43 68,61 76,61', 26],
  ['0,0 40,0 42,12 44,1 46,4 50,2 60,3 76,2', 1],
  ['0,1 44,2 46,30 47,65 49,60 55,60 58,62 60,44 62,42 64,36 66,42 68,61 76,61', 25],
  ['0,0 41,0 43,4 45,1 47,7 50,3 54,4 58,5 63,8 68,4 76,5', 4],
  ['0,0 38,0 40,4 42,0 45,2 47,50 49,36 51,40 53,37 55,40 58,45 60,38 63,36 66,62 70,60 76,61', 24],
  ['0,0 44,0 46,6 49,3 52,5 55,4 57,6 59,12 61,3 64,4 70,2 76,2', 2],
  ['0,0 42,2 46,3 47,30 48,60 50,42 52,35 55,40 57,40 58,28 61,48 62,40 66,37 70,40 72,46 74,38 76,40', 24],
  ['0,2 44,2 47,10 50,12 54,10 56,12 58,51 60,13 64,11 68,8 72,5 76,7', 6]
];

let grid = '';
for (let i = 1; i < 10; i++) {
  grid += `M0 ${i * 7.6}H76`;
}
grid += 'M19 0V76M38 0V76M57 0V76';

function core([points, kernel]) {
  const line = points.split(' ').map(p => p.split(',')).map(([x, y]) => `${x},${76 - y}`).join(' ');
  let k = '46,76 ';
  for (let x = 46; x <= 76; x += 1.5) {
    k += `${x},${(76 - kernel - (rnd() - 0.5) * kernel * 0.25).toFixed(1)} `;
  }
  return `<svg viewBox="0 0 76 76" preserveAspectRatio="none">
    <path d="${grid}" stroke="#dceef4" fill="none" stroke-width=".7"/>
    <polygon points="0,76 ${line} 76,76" fill="#cfe3f3" fill-opacity=".4"/>
    <polygon points="${k}76,76" fill="#bcdcec" fill-opacity=".6" stroke="#9fc9d8" stroke-width=".6"/>
    <polyline points="${line}" fill="none" stroke="#3f9cb8" stroke-width=".8"/>
    <rect x=".5" y=".5" width="75" height="75" fill="none" stroke="#74b3c6"/></svg>`;
}
byId('cores').innerHTML = cores.map(core).join('');

// name, details, frame colour, graph
const devices = [
  ['CPU', '39% &nbsp;4,88 GHz', '#4da3c8', 'M0 22H17L20 20V12L22 14 26 13 29 15 33 14V23H0'],
  ['Memory', '8,3/31,9 GB (26%)', '#b052a8', 'M0 17L14 17 18 18 22 17 33 17V23H0'],
  ['Disk 0 (E:)', 'SSD<br>0%', '#5cae56', ''],
  ['Disk 1 (D: H:)', 'HDD<br>0%', '#5cae56', ''],
  ['Disk 2 (T:)', 'SSD<br>0%', '#5cae56', ''],
  ['Disk 3 (S:)', 'SSD<br>0%', '#5cae56', ''],
  ['Disk 4 (C: I:)', 'SSD<br>0%', '#5cae56', ''],
  ['Disk 5 (Z:)', 'HDD<br>0%', '#5cae56', ''],
  ['Ethernet', 'Ethernet 2<br>S: &nbsp;0 &nbsp;R: &nbsp;0 Kbps', '#c2703c', 'M1 23V14L2 22 7 23 8 13 9 22 13 23 14 18 15 23 17 7 18 20 19 1 20 23 25 22 26 17 27 23 31 18 32 23'],
  ['GPU 0', 'NVIDIA GeForce GTX ...<br>0% (59 °C)', '#4da3c8', 'M0 23H14L15 1 16 23H33']
];

byId('side').innerHTML = devices.map(([name, text, color, path], i) =>
  `<button class="side-item ${i < 2 ? 'two' : ''} ${i === 0 ? 'current' : ''}">
    <svg viewBox="0 0 33 24"><rect x=".5" y=".5" width="32" height="23" fill="#fff" stroke="${color}"/><path d="${path}" fill="${color}" fill-opacity=".15" stroke="${color}" stroke-width=".8"/></svg>
    <span><strong>${name}</strong>${text}</span></button>`).join('');
```
